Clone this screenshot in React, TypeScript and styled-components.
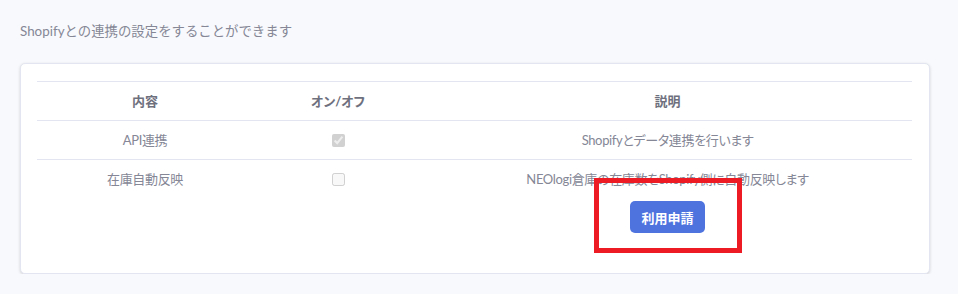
import React from "react";
import styled, { createGlobalStyle } from "styled-components";

const Global = createGlobalStyle`
  html, body { margin: 0; padding: 0; background: #f8f9fc; }
  body { font-family: "Lato", "Noto Sans CJK JP", sans-serif; }
`;

const Page = styled.div`
  padding: 21px 28px 0 20px;
  width: 958px;
  box-sizing: border-box;
`;

const Lead = styled.p`
  margin: 0 0 22px;
  font-size: 13.4px;
  line-height: 20px;
  color: #858796;
`;

const Card = styled.div`
  width: 910px;
  box-sizing: border-box;
  background: #fff;
  border: 1px solid #e3e6f0;
  border-radius: 5px;
  box-shadow: 0 1px 3px rgba(58, 59, 69, 0.2);
  padding: 17px 17px 17px 16px;
`;

const Table = styled.table`
  width: 100%;
  table-layout: fixed;
  border-collapse: collapse;
  font-size: 13px;
  color: #858796;
  font-feature-settings: "palt";
`;

const Th = styled.th<{ $w?: number }>`
  box-sizing: border-box;
  width: ${(p) => (p.$w ? `${p.$w}px` : "auto")};
  padding: 10px 12px;
  line-height: 18px;
  border-top: 1px solid #e3e6f0;
  border-bottom: 1px solid #e3e6f0;
  color: #6e707e;
  font-weight: 700;
  text-align: center;
`;

const Td = styled.td<{ $last?: boolean }>`
  padding: 10px 12px;
  line-height: 18px;
  letter-spacing: -0.35px;
  text-align: center;
  vertical-align: top;
  border-bottom: ${(p) => (p.$last ? "none" : "1px solid #e3e6f0")};
`;

const Check = styled.input`
  margin: 3px 0 0;
  width: 13px;
  height: 13px;
  vertical-align: top;
`;

const ActionWrap = styled.div`
  display: flex;
  justify-content: center;
  margin: 13px 0 13px;
`;

const Anchor = styled.div`
  position: relative;
  display: inline-flex;
`;

const Button = styled.button`
  width: 75px;
  height: 32px;
  border: none;
  border-radius: 5px;
  background: #4e73df;
  color: #fff;
  font-family: "Lato", "Noto Sans CJK JP", sans-serif;
  font-size: 13px;
  font-weight: 700;
  letter-spacing: 0;
  cursor: pointer;
`;

const Highlight = styled.div`
  position: absolute;
  left: -36px;
  right: -37px;
  top: -23px;
  bottom: -20px;
  border: 5px solid #ed1c24;
  pointer-events: none;
`;

const rows = [
  { name: "API連携", on: true, desc: "Shopifyとデータ連携を行います", action: false },
  { name: "在庫自動反映", on: false, desc: "NEOlogi倉庫の在庫数をShopify側に自動反映します", action: true },
];

export default function App() {
  return (
    <>
      <Global />
      <Page>
        <Lead>Shopifyとの連携の設定をすることができます</Lead>
        <Card>
          <Table>
            <thead>
              <tr>
                <Th $w={216}>内容</Th>
                <Th $w={170}>オン/オフ</Th>
                <Th>説明</Th>
              </tr>
            </thead>
            <tbody>
              {rows.map((r, i) => {
                const last = i === rows.length - 1;
                return (
                  <tr key={r.name}>
                    <Td $last={last}>{r.name}</Td>
                    <Td $last={last}>
                      <Check type="checkbox" disabled defaultChecked={r.on} />
                    </Td>
                    <Td $last={last}>
                      {r.desc}
                      {r.action && (
                        <ActionWrap>
                          <Anchor>
                            <Button>利用申請</Button>
                            <Highlight />
                          </Anchor>
                        </ActionWrap>
                      )}
                    </Td>
                  </tr>
                );
              })}
            </tbody>
          </Table>
        </Card>
      </Page>
    </>
  );
}
